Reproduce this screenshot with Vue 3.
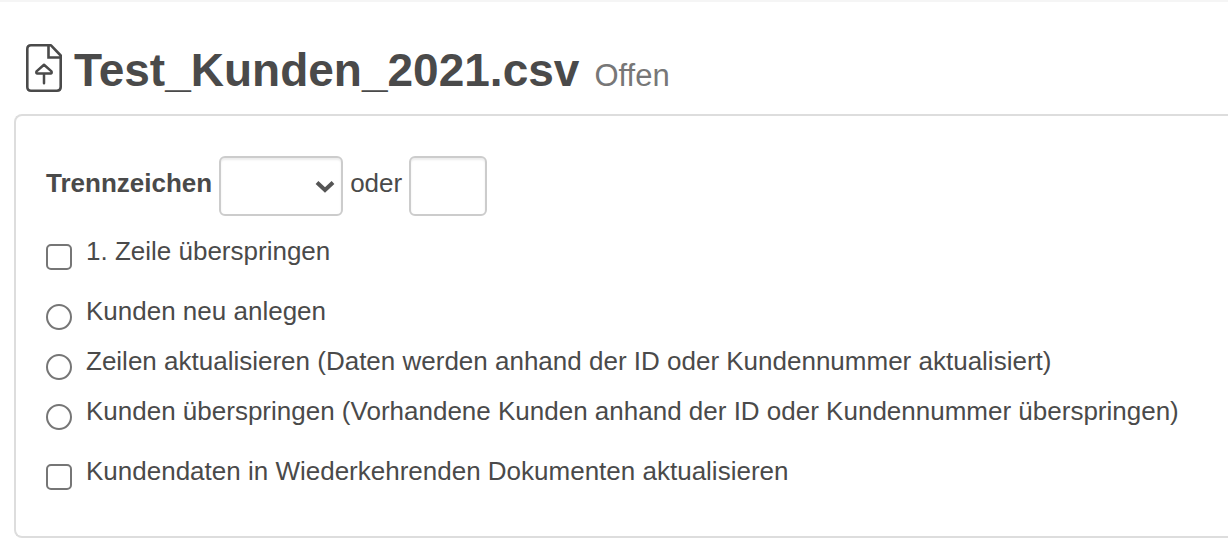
<template>
  <main class="page">
    <h1 class="title">
      <svg class="file-icon" width="36" height="48" viewBox="0 0 36 48" fill="none" stroke="#4a4a4a" stroke-width="2.6" stroke-linejoin="round" stroke-linecap="round" aria-hidden="true">
        <path d="M5 1.3H25L34.7 11.5V43Q34.7 46.7 31 46.7H5Q1.3 46.7 1.3 43V5Q1.3 1.3 5 1.3Z" />
        <path d="M22.5 2V13.5H34" stroke-linejoin="miter" />
        <path d="M18 39.2V29.4M18 20.8L10.5 27.4Q9.8 29.4 11.4 29.4H24.6Q26.2 29.4 25.5 27.4Z" stroke-width="2.5" />
      </svg>
      <span class="name">Test_Kunden_2021.csv</span>
      <small class="status">Offen</small>
    </h1>

    <form class="well" @submit.prevent>
      <div class="separator">
        <label class="strong" for="separator">Trennzeichen</label>
        <span class="select-wrap">
          <select id="separator" v-model="separator">
            <option value=""></option>
            <option value=",">,</option>
            <option value=";">;</option>
          </select>
          <svg class="arrow" width="20" height="14" viewBox="0 0 20 14" fill="none" stroke="#555" stroke-width="4" aria-hidden="true">
            <path d="M2 2.5L10 10L18 2.5" />
          </svg>
        </span>
        <label for="custom">oder</label>
        <input id="custom" v-model="custom" class="custom" type="text">
      </div>

      <label class="option">
        <input v-model="skipFirst" type="checkbox">
        <span>1. Zeile überspringen</span>
      </label>

      <div class="modes">
        <label v-for="mode in modes" :key="mode.value" class="option">
          <input v-model="selectedMode" type="radio" name="mode" :value="mode.value">
          <span>{{ mode.label }}</span>
        </label>
      </div>

      <label class="option">
        <input v-model="updateRecurring" type="checkbox">
        <span>Kundendaten in Wiederkehrenden Dokumenten aktualisieren</span>
      </label>
    </form>
  </main>
</template>

<script setup>
import { ref } from 'vue';

const separator = ref('');
const custom = ref('');
const skipFirst = ref(false);
const selectedMode = ref('');
const updateRecurring = ref(false);

const modes = [
  { value: 'create', label: 'Kunden neu anlegen' },
  { value: 'update', label: 'Zeilen aktualisieren (Daten werden anhand der ID oder Kundennummer aktualisiert)' },
  { value: 'skip', label: 'Kunden überspringen (Vorhandene Kunden anhand der ID oder Kundennummer überspringen)' },
];
</script>

<style>
body {
  background: #fff;
}
</style>

<style scoped>
.page {
  border-top: 2px solid #f5f5f5;
  padding: 38px 0 16px 14px;
  color: #4a4a4a;
  font-family: "Helvetica Neue", "Liberation Sans", Arial, sans-serif;
  font-size: 26px;
  line-height: 38px;
}
.title {
  display: flex;
  align-items: baseline;
  margin: 0 0 14px;
  padding-left: 12px;
  font-size: 46px;
  line-height: 60px;
}
.file-icon {
  flex: none;
  align-self: flex-start;
  margin: 4px 12px 0 0;
}
.status {
  margin-left: 15px;
  color: #777;
  font-size: 31px;
  font-weight: normal;
  line-height: 38px;
}
.well {
  display: flex;
  flex-direction: column;
  padding: 40px 30px 46px;
  border: 2px solid #ddd;
  border-right: none;
  border-radius: 8px 0 0 8px;
}
.separator {
  display: flex;
  gap: 7px;
  margin-bottom: 16px;
}
.separator label {
  margin-top: 8px;
}
.strong {
  font-weight: bold;
}
.select-wrap {
  position: relative;
}
select,
.custom {
  display: block;
  box-sizing: border-box;
  width: 124px;
  height: 60px;
  margin: 0;
  padding: 8px 12px;
  border: 2px solid #ccc;
  border-radius: 6px;
  background: #fff;
  box-shadow: inset 0 2px 2px rgba(0, 0, 0, 0.075);
  color: #555;
  font: inherit;
  appearance: none;
}
.custom {
  width: 78px;
}
.arrow {
  position: absolute;
  top: 24px;
  right: 8px;
  pointer-events: none;
}
.option {
  display: flex;
  gap: 14px;
}
.option input {
  flex: none;
  box-sizing: border-box;
  width: 26px;
  height: 26px;
  margin: 12px 0 0;
  border: 2px solid #767676;
  border-radius: 5px;
  background: #fff;
  appearance: none;
}
.option input[type="radio"] {
  border-radius: 50%;
}
.option input:checked {
  background: #767676;
  box-shadow: inset 0 0 0 4px #fff;
}
.modes {
  display: flex;
  flex-direction: column;
  gap: 12px;
  margin: 22px 0;
}
</style>
